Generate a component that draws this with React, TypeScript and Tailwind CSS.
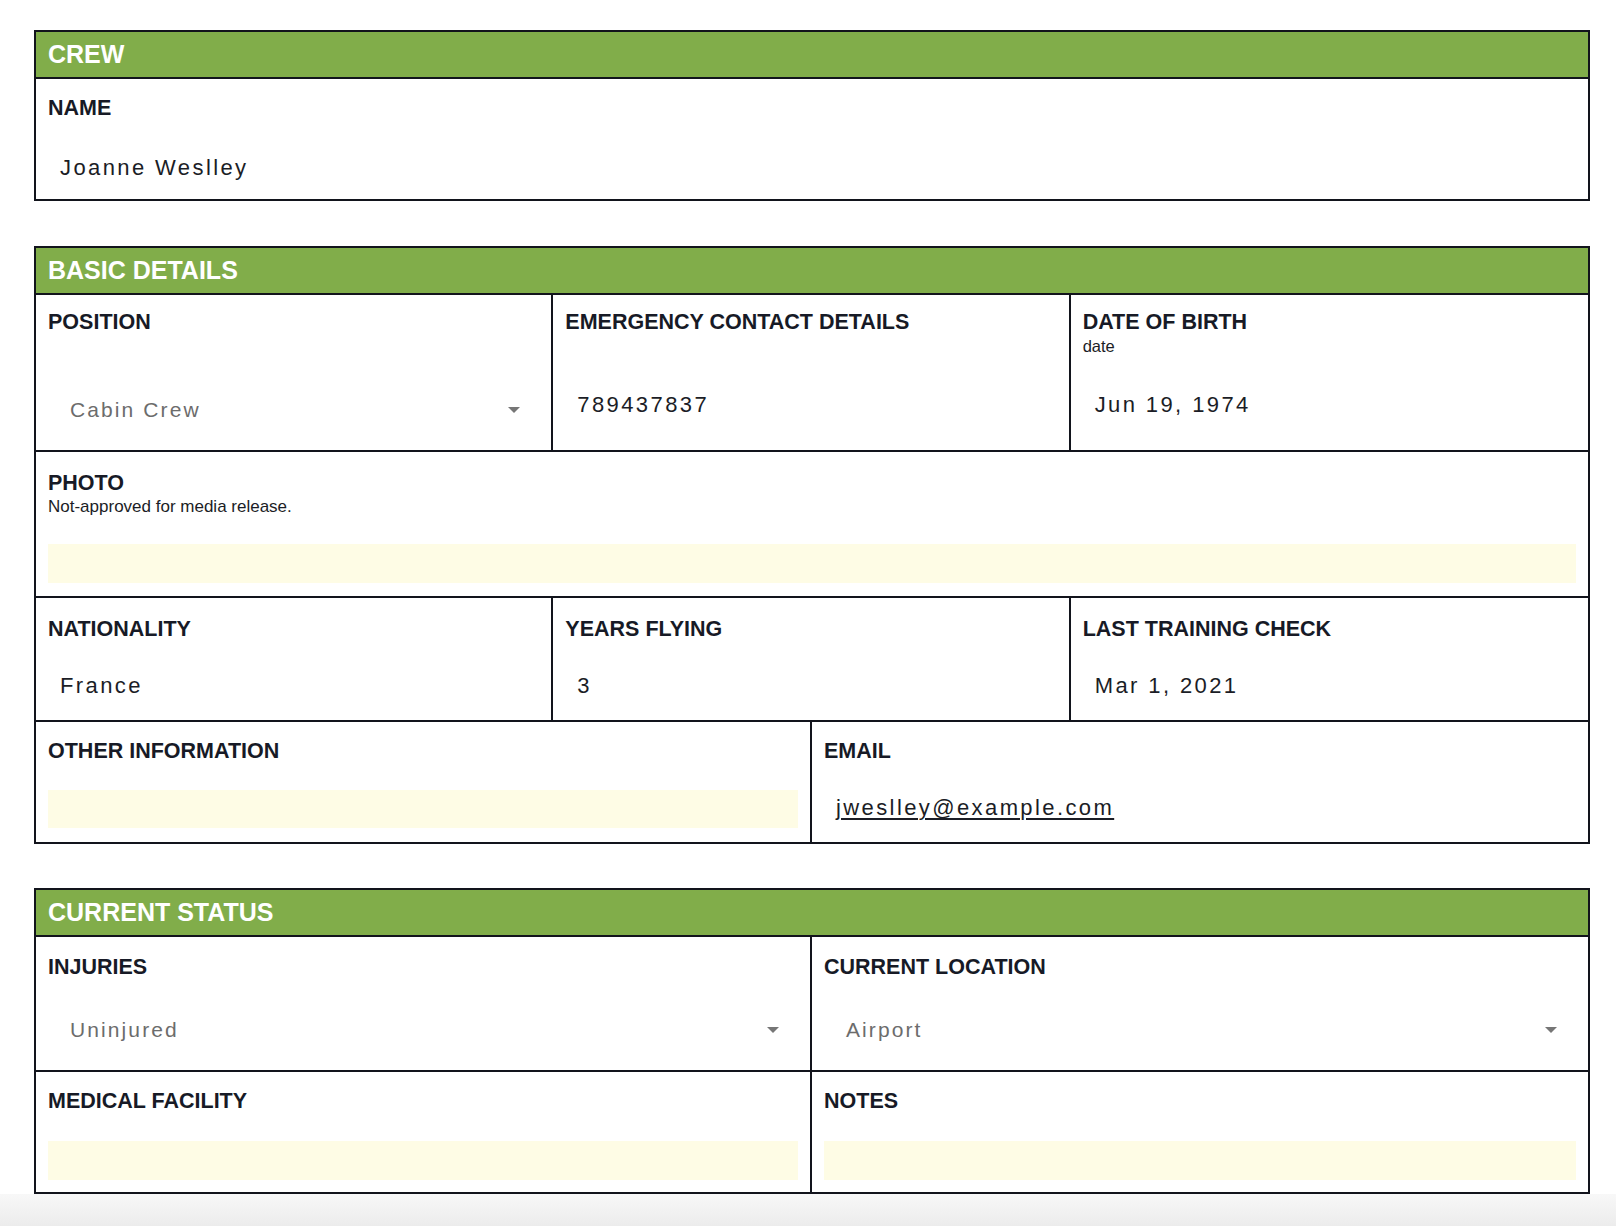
import React from "react";

const FONT = { fontFamily: '"Liberation Sans", Arial, Helvetica, sans-serif' };

function Caret() {
  return (
    <svg width="14" height="8" viewBox="0 0 14 8" className="shrink-0">
      <path d="M1 1 L13 1 L7 7 Z" fill="#767676" />
    </svg>
  );
}

function Label({ children }: { children: React.ReactNode }) {
  return (
    <div className="text-[21.5px] leading-[26px] font-bold text-[#171a26]">
      {children}
    </div>
  );
}

function Value({ children, pb }: { children: React.ReactNode; pb: string }) {
  return (
    <div className={`mt-auto pl-[12px] text-[22px] leading-[30px] tracking-[2.4px] text-[#1b1d26] ${pb}`}>
      {children}
    </div>
  );
}

function SelectValue({ children }: { children: React.ReactNode }) {
  return (
    <div className="mt-auto flex items-center justify-between pl-[22px] pr-[18px] pb-[25px]">
      <span className="text-[21px] leading-[30px] tracking-[2.1px] text-[#6c6c6c]">{children}</span>
      <Caret />
    </div>
  );
}

function Header({ children }: { children: React.ReactNode }) {
  return (
    <div className="h-[47px] bg-[#81ad4a] border-b-2 border-[#12141c] flex items-center px-[12px]">
      <span className="text-[25px] font-bold text-white leading-none">{children}</span>
    </div>
  );
}

export default function App() {
  return (
    <div style={FONT} className="min-h-[1226px] bg-white flex flex-col">
      <div className="pt-[30px] pl-[34px] pr-[26px]">
        {/* CREW */}
        <section className="border-2 border-[#12141c]">
          <Header>CREW</Header>
          <div className="h-[120px] flex flex-col px-[12px] pt-[16px]">
            <Label>NAME</Label>
            <Value pb="pb-[16px]">Joanne Weslley</Value>
          </div>
        </section>

        {/* BASIC DETAILS */}
        <section className="mt-[45px] border-2 border-[#12141c]">
          <Header>BASIC DETAILS</Header>
          <div className="h-[155px] grid grid-cols-3 divide-x-2 divide-[#12141c]">
            <div className="flex flex-col px-[12px] pt-[14px]">
              <Label>POSITION</Label>
              <SelectValue>Cabin Crew</SelectValue>
            </div>
            <div className="flex flex-col px-[12px] pt-[14px]">
              <Label>EMERGENCY CONTACT DETAILS</Label>
              <Value pb="pb-[30px]">789437837</Value>
            </div>
            <div className="flex flex-col px-[12px] pt-[14px]">
              <Label>DATE OF BIRTH</Label>
              <div className="text-[16.5px] leading-[20px] text-[#1b1d26] mt-[1px]">date</div>
              <Value pb="pb-[30px]">Jun 19, 1974</Value>
            </div>
          </div>
          <div className="h-[146px] border-t-2 border-[#12141c] flex flex-col px-[12px] pt-[18px]">
            <Label>PHOTO</Label>
            <div className="text-[17px] leading-[22px] text-[#1b1d26]">Not-approved for media release.</div>
            <div className="mt-auto mb-[13px] h-[39px] bg-[#fefce5]" />
          </div>
          <div className="h-[124px] border-t-2 border-[#12141c] grid grid-cols-3 divide-x-2 divide-[#12141c]">
            <div className="flex flex-col px-[12px] pt-[18px]">
              <Label>NATIONALITY</Label>
              <Value pb="pb-[19px]">France</Value>
            </div>
            <div className="flex flex-col px-[12px] pt-[18px]">
              <Label>YEARS FLYING</Label>
              <Value pb="pb-[19px]">3</Value>
            </div>
            <div className="flex flex-col px-[12px] pt-[18px]">
              <Label>LAST TRAINING CHECK</Label>
              <Value pb="pb-[19px]">Mar 1, 2021</Value>
            </div>
          </div>
          <div className="h-[122px] border-t-2 border-[#12141c] grid grid-cols-2 divide-x-2 divide-[#12141c]">
            <div className="flex flex-col px-[12px] pt-[16px]">
              <Label>OTHER INFORMATION</Label>
              <div className="mt-auto mb-[14px] h-[38px] bg-[#fefce5]" />
            </div>
            <div className="flex flex-col px-[12px] pt-[16px]">
              <Label>EMAIL</Label>
              <Value pb="pb-[19px]">
                <span className="underline underline-offset-[3px] decoration-[1.5px] tracking-[2.4px]">jweslley@example.com</span>
              </Value>
            </div>
          </div>
        </section>

        {/* CURRENT STATUS */}
        <section className="mt-[44px] border-2 border-[#12141c]">
          <Header>CURRENT STATUS</Header>
          <div className="h-[133px] grid grid-cols-2 divide-x-2 divide-[#12141c]">
            <div className="flex flex-col px-[12px] pt-[17px]">
              <Label>INJURIES</Label>
              <SelectValue>Uninjured</SelectValue>
            </div>
            <div className="flex flex-col px-[12px] pt-[17px]">
              <Label>CURRENT LOCATION</Label>
              <SelectValue>Airport</SelectValue>
            </div>
          </div>
          <div className="h-[122px] border-t-2 border-[#12141c] grid grid-cols-2 divide-x-2 divide-[#12141c]">
            <div className="flex flex-col px-[12px] pt-[16px]">
              <Label>MEDICAL FACILITY</Label>
              <div className="mt-auto mb-[12px] h-[39px] bg-[#fefce5]" />
            </div>
            <div className="flex flex-col px-[12px] pt-[16px]">
              <Label>NOTES</Label>
              <div className="mt-auto mb-[12px] h-[39px] bg-[#fefce5]" />
            </div>
          </div>
        </section>
      </div>
      <div className="flex-1 min-h-[30px] bg-gradient-to-b from-[#f8f8f8] to-[#ececec]" />
    </div>
  );
}
